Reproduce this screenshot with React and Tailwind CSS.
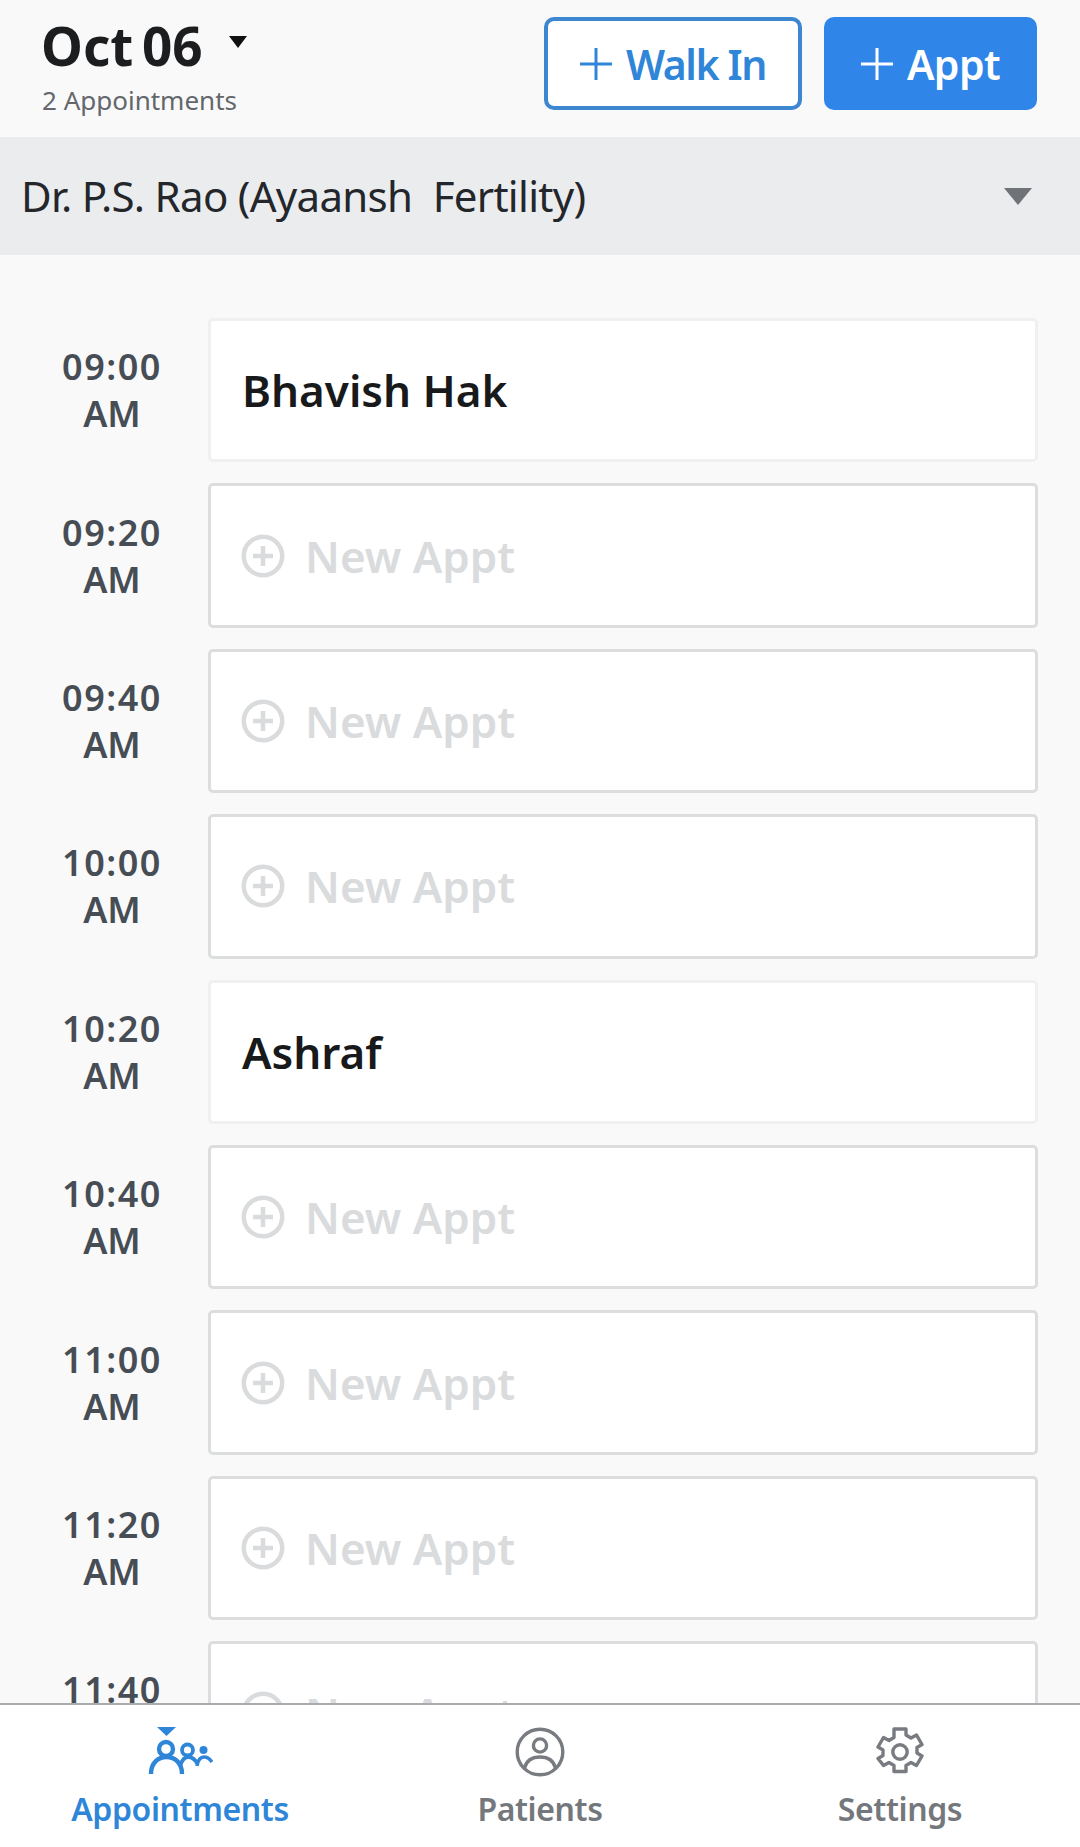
import React from "react";

const slots = [
  ["09:00", "Bhavish Hak"],
  ["09:20"],
  ["09:40"],
  ["10:00"],
  ["10:20", "Ashraf"],
  ["10:40"],
  ["11:00"],
  ["11:20"],
  ["11:40"],
];

function PlusCircle() {
  return (
    <svg width="44" height="44" viewBox="0 0 44 44" fill="none" stroke="#d9dbdd" strokeWidth="4.5">
      <circle cx="22" cy="22" r="19.2" />
      <path d="M22 12v20M12 22h20" />
    </svg>
  );
}

function Plus({ color }) {
  return (
    <svg width="32" height="34" viewBox="0 0 32 34" fill="none" stroke={color} strokeWidth="3">
      <path d="M16 1v32M0 17h32" />
    </svg>
  );
}

function Caret({ w, h, color }) {
  return (
    <svg width={w} height={h} viewBox="0 0 10 7" fill={color} preserveAspectRatio="none">
      <path d="M0 0h10L5 7z" />
    </svg>
  );
}

function AppointmentsIcon() {
  return (
    <svg width="66" height="50" viewBox="0 0 66 50" fill="none" stroke="#2f86d8" strokeWidth="4.4">
      <path d="M10 0h19l-9.500 9z" fill="#2f86d8" stroke="none" />
      <circle cx="19" cy="22" r="7" />
      <path d="M4 47c0-11 7-17 15.500-17S35 36 35 47" />
      <circle cx="40.500" cy="23" r="5.500" strokeWidth="3.8" />
      <path d="M33 39c2-6 5-9 8-9 4 0 7 2 9.500 7" strokeWidth="3.8" />
      <circle cx="56.500" cy="23" r="4" fill="#2f86d8" stroke="none" />
      <path d="M50 39c1-6 4-9 7-9s6 2 8 5" strokeWidth="3.4" />
    </svg>
  );
}

function PatientsIcon() {
  return (
    <svg width="50" height="50" viewBox="0 0 50 50" fill="none" stroke="#787c81" strokeWidth="3.4">
      <circle cx="25" cy="25" r="22.8" />
      <circle cx="25" cy="18.500" r="6.600" />
      <path d="M9.500 41c2-7.500 8-11 15.500-11s13.500 3.500 15.500 11" />
    </svg>
  );
}

function SettingsIcon() {
  return (
    <svg width="48" height="50" viewBox="0 0 48 50" fill="none" stroke="#787c81" strokeWidth="3.4" strokeLinejoin="round">
      <path d="M18 2h12v6l5 3 5.500-3 5.500 9.500-5 3v5.500l5 3-5.500 9.500-5.500-3-5 3v6H18v-6l-5-3-5.500 3L2 31.500l5-3V23l-5-3 5.500-9.500L13 13.500l5-3z" />
      <circle cx="24" cy="25" r="7.200" />
    </svg>
  );
}

function Slot({ time, name }) {
  return (
    <div className="flex h-[144.4px] shrink-0 items-center">
      <div className="w-[208px] pl-4 text-center text-[36px] leading-[47px] font-semibold tracking-[1.5px] text-[#464d54]">
        <div>{time}</div>
        <div className="tracking-normal">AM</div>
      </div>
      <div
        className={
          "flex h-full w-[830px] items-center rounded-[5px] border-[3px] bg-white pl-[31px] " +
          (name ? "border-[#eff0f1]" : "border-[#dcddde]")
        }
      >
        {name ? (
          <span className="text-[44px] font-semibold text-[#17191b]">{name}</span>
        ) : (
          <div className="-ml-px flex items-center gap-[20px]">
            <PlusCircle />
            <span className="text-[44px] font-semibold text-[#d9dbdd]">New Appt</span>
          </div>
        )}
      </div>
    </div>
  );
}

function Tab({ icon, label, active }) {
  return (
    <div className="flex w-[360px] flex-col items-center">
      <div className="flex h-[50px] items-center">{icon}</div>
      <div
        className={
          "mt-[10px] text-[32px] leading-[44px] font-semibold tracking-[-0.4px] " +
          (active ? "text-[#2f86d8]" : "text-[#74787d]")
        }
      >
        {label}
      </div>
    </div>
  );
}

export default function App() {
  return (
    <div className="flex h-[1847px] w-[1080px] flex-col overflow-hidden bg-[#f9f9fa] font-['Noto_Sans',sans-serif]">
      <header className="flex h-[137px] shrink-0 items-start justify-between pr-[43px] pl-[42px]">
        <div>
          <div className="mt-[13px] flex items-center">
            <span className="-ml-px text-[53px] leading-[66px] font-bold [word-spacing:-5px] text-[#1b1d1f]">Oct 06</span>
            <span className="mb-[8px] ml-[26px]"><Caret w={18} h={12} color="#111" /></span>
          </div>
          <div className="mt-[4px] text-[26px] leading-[34px] text-[#63676b]">2 Appointments</div>
        </div>
        <div className="mt-[17px] flex gap-[22px]">
          <button className="flex h-[93px] w-[258px] items-center justify-center gap-[14px] rounded-[10px] border-[4px] border-[#3d86d0] bg-white text-[41px] font-semibold tracking-[-1.4px] text-[#2f86d8]">
            <Plus color="#2f86d8" />
            <span className="mt-[2px]">Walk In</span>
          </button>
          <button className="flex h-[93px] w-[213px] items-center justify-center gap-[14px] rounded-[10px] bg-[#2f86e8] text-[41px] font-semibold tracking-[-0.6px] text-white">
            <Plus color="#fff" />
            <span className="mt-[2px]">Appt</span>
          </button>
        </div>
      </header>

      <div className="flex h-[118px] shrink-0 items-center justify-between bg-[#ebecee] pr-[48px] pl-[21px]">
        <span className="-mt-[2px] text-[42px] tracking-[-0.7px] whitespace-pre text-[#23262a]">Dr. P.S. Rao (Ayaansh  Fertility)</span>
        <Caret w={28} h={17} color="#6f7276" />
      </div>

      <main className="flex min-h-0 flex-1 flex-col gap-[21px] overflow-hidden pt-[63px]">
        {slots.map(([time, name]) => (
          <Slot key={time} time={time} name={name} />
        ))}
      </main>

      <nav className="flex h-[144px] shrink-0 border-t-2 border-[#a9acaf] bg-white pt-[22px]">
        <Tab icon={<AppointmentsIcon />} label="Appointments" active />
        <Tab icon={<PatientsIcon />} label="Patients" />
        <Tab icon={<SettingsIcon />} label="Settings" />
      </nav>
    </div>
  );
}
